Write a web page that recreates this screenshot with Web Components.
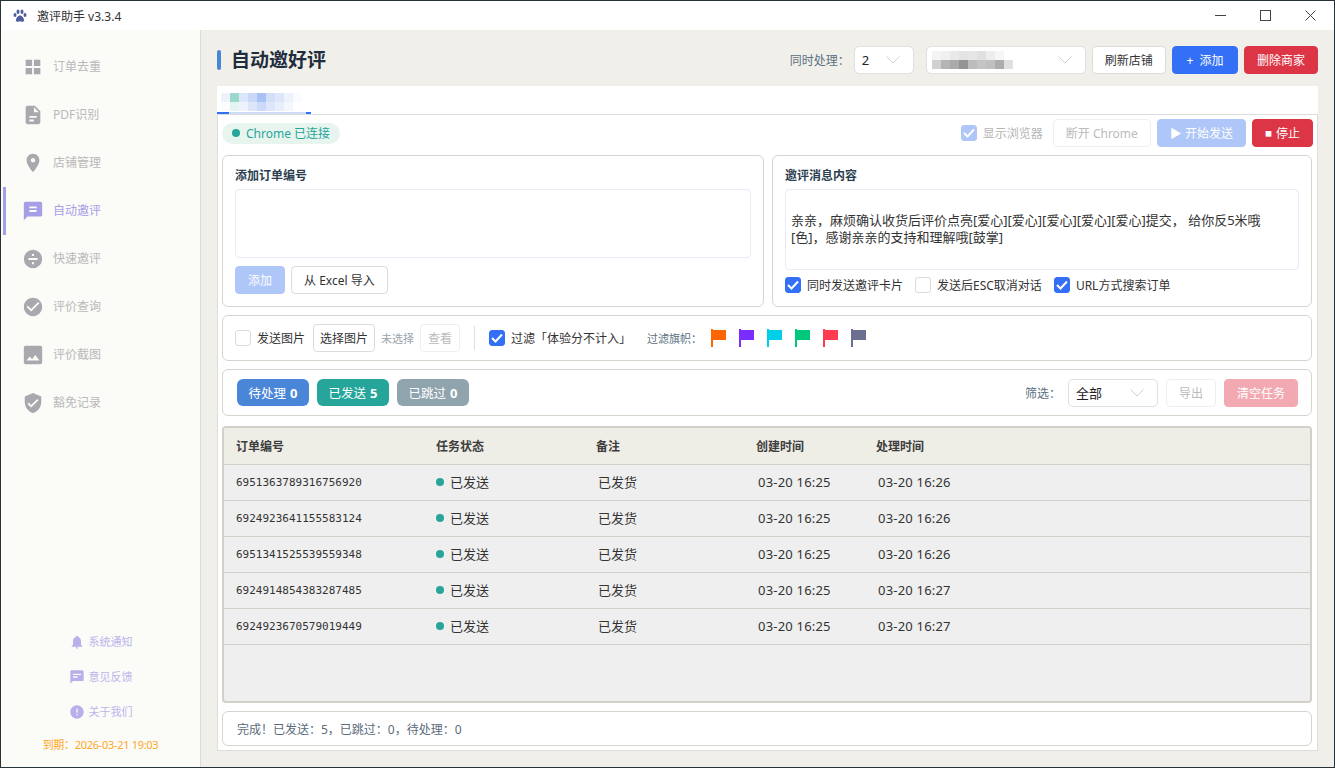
<!DOCTYPE html>
<html lang="zh">
<head>
<meta charset="utf-8">
<title>邀评助手</title>
<style>
  html, body { margin: 0; padding: 0; }
  body {
    font-family: "Noto Sans", "Noto Sans CJK SC", sans-serif;
    font-size: 12px;
    color: #333;
    overflow: hidden;
  }
  .lbl { font-size: 12px; color: #5b7080; white-space: nowrap; }
  .muted { font-size: 11px; color: #9aa5ad; white-space: nowrap; }
  .flagslbl { font-size: 11px; color: #5b7080; margin-left: 16px; white-space: nowrap; }
  .stopmark { font-size: 7px; margin-right: 4px; }
</style>
</head>
<body>
<app-window>
  <title-bar slot="top" title="邀评助手 v3.3.4"></title-bar>

  <side-bar slot="side">
    <nav-item icon="grid" label="订单去重"></nav-item>
    <nav-item icon="doc" label="PDF识别"></nav-item>
    <nav-item icon="place" label="店铺管理"></nav-item>
    <nav-item icon="chat" label="自动邀评" active></nav-item>
    <nav-item icon="divide" label="快速邀评"></nav-item>
    <nav-item icon="check" label="评价查询"></nav-item>
    <nav-item icon="image" label="评价截图"></nav-item>
    <nav-item icon="shield" label="豁免记录"></nav-item>
    <side-link slot="foot" icon="bell" label="系统通知"></side-link>
    <side-link slot="foot" icon="feedback" label="意见反馈"></side-link>
    <side-link slot="foot" icon="info" label="关于我们"></side-link>
  </side-bar>

  <main-area slot="main">
    <page-header slot="head" title="自动邀好评">
      <span class="lbl">同时处理：</span>
      <ui-select value="2" style="width:60px;margin-left:-2px"></ui-select>
      <ui-select style="width:160px;margin-left:6px"><mosaic-block cell="9" rows="#f4f4f4,#f0f0f0,#e9e9e9,#e4e4e4,#e6e6e6,#e0e0e0,#ededed,#f6f6f6;#d0d0d0,#b4b4b4,#aaaaaa,#949494,#bcbcbc,#c4c4c4,#c0c0c0,#acacac,#e0e0e0"></mosaic-block></ui-select>
      <ui-button>刷新店铺</ui-button>
      <ui-button variant="primary" style="padding:0 13.5px">+&nbsp; 添加</ui-button>
      <ui-button variant="danger">删除商家</ui-button>
    </page-header>

    <shop-tab slot="tab"><mosaic-block cell="9" rows="#eef3fb,#9bd8cb,#dbe5fb,#c9d8f9,#a9c2f6,#d3def9,#dde6fb,#eef2fd,#fafbff;#fafcfd,#e6f3f3,#eef3fb,#dde6fb,#ccd9f9,#dde6fb,#e8eefb,#f4f7fe"></mosaic-block></shop-tab>

    <task-panel slot="panel">
      <panel-toolbar slot="toolbar">
        <status-pill slot="left">Chrome 已连接</status-pill>
        <ui-check checked disabled>显示浏览器</ui-check>
        <ui-button disabled style="margin-left:4px">断开 Chrome</ui-button>
        <ui-button variant="primary" disabled>▶ 开始发送</ui-button>
        <ui-button variant="danger"><span class="stopmark">■</span>停止</ui-button>
      </panel-toolbar>

      <div-row slot="cards">
        <form-card title="添加订单编号">
          <ui-textarea></ui-textarea>
          <card-foot slot="foot" style="--foot-h:28px;--foot-gap:6px">
            <ui-button variant="primary" disabled>添加</ui-button>
            <ui-button>从 Excel 导入</ui-button>
          </card-foot>
        </form-card>
        <form-card title="邀评消息内容">
          <ui-textarea>亲亲，麻烦确认收货后评价点亮[爱心][爱心][爱心][爱心][爱心]提交， 给你反5米哦<br>[色]，感谢亲亲的支持和理解哦[鼓掌]</ui-textarea>
          <card-foot slot="foot" style="--foot-h:16px;--foot-gap:12px;--foot-top:7px;margin-bottom:1px">
            <ui-check checked>同时发送邀评卡片</ui-check>
            <ui-check>发送后ESC取消对话</ui-check>
            <ui-check checked>URL方式搜索订单</ui-check>
          </card-foot>
        </form-card>
      </div-row>

      <bar-card slot="filter" style="--bar-h:44px">
        <ui-check>发送图片</ui-check>
        <ui-button size="small" style="margin-left:8px">选择图片</ui-button>
        <span class="muted" style="margin-left:6px">未选择</span>
        <ui-button size="small" disabled style="margin-left:6px;padding:0 7px">查看</ui-button>
        <bar-divider></bar-divider>
        <ui-check checked>过滤「体验分不计入」</ui-check>
        <span class="flagslbl">过滤旗帜：</span>
        <flag-icon color="#ff6600" style="margin-left:9px"></flag-icon>
        <flag-icon color="#7b2cff"></flag-icon>
        <flag-icon color="#00cfe8"></flag-icon>
        <flag-icon color="#00c87a"></flag-icon>
        <flag-icon color="#ff3b52"></flag-icon>
        <flag-icon color="#6b7090"></flag-icon>
      </bar-card>

      <bar-card slot="stats" style="--bar-h:45px">
        <stat-pill color="#4a86d8" label="待处理" count="0" style="margin-left:2px"></stat-pill>
        <stat-pill color="#26a69a" label="已发送" count="5" style="margin-left:8px"></stat-pill>
        <stat-pill color="#90a4ae" label="已跳过" count="0" style="margin-left:8px"></stat-pill>
        <span class="lbl" style="margin-left:auto">筛选：</span>
        <ui-select value="全部" style="width:90px;margin:0 8px 0 7px"></ui-select>
        <ui-button disabled>导出</ui-button>
        <ui-button variant="danger" disabled style="margin:0 1px 0 8px">清空任务</ui-button>
      </bar-card>

      <task-table slot="table">
        <task-row order="6951363789316756920" created="03-20 16:25" done="03-20 16:26"></task-row>
        <task-row order="6924923641155583124" created="03-20 16:25" done="03-20 16:26"></task-row>
        <task-row order="6951341525539559348" created="03-20 16:25" done="03-20 16:26"></task-row>
        <task-row order="6924914854383287485" created="03-20 16:25" done="03-20 16:27"></task-row>
        <task-row order="6924923670579019449" created="03-20 16:25" done="03-20 16:27"></task-row>
      </task-table>

      <status-line slot="status">完成！已发送：5，已跳过：0，待处理：0</status-line>
    </task-panel>
  </main-area>
</app-window>

<script>
const ICONS = {
  grid: '<path d="M4 4h7v7H4zM13 4h7v7h-7zM4 13h7v7H4zM13 13h7v7h-7z"/>',
  doc: '<path fill-rule="evenodd" d="M14 2H6c-1.1 0-2 .9-2 2v16c0 1.1.9 2 2 2h12c1.1 0 2-.9 2-2V8l-6-6zM13 3.5L18.5 9H13zM8 13h8v2H8zM8 17h5v2H8z"/>',
  place: '<path d="M12 2C8.13 2 5 5.13 5 9c0 5.25 7 13 7 13s7-7.75 7-13c0-3.87-3.13-7-7-7zm0 9.5c-1.38 0-2.5-1.12-2.5-2.5s1.12-2.5 2.5-2.5 2.5 1.12 2.5 2.5-1.12 2.5-2.5 2.5z"/>',
  chat: '<path fill-rule="evenodd" d="M20 2H4c-1.1 0-2 .9-2 2v18l4-4h14c1.1 0 2-.9 2-2V4c0-1.1-.9-2-2-2zM8 7h8v2H8zM8 11h8v2H8z"/>',
  divide: '<path fill-rule="evenodd" d="M12 2a10 10 0 1 0 0 20 10 10 0 0 0 0-20zM7 11h10v2H7zM10.7 7.5a1.3 1.3 0 1 1 2.6 0 1.3 1.3 0 0 1-2.6 0zM10.7 16.5a1.3 1.3 0 1 1 2.6 0 1.3 1.3 0 0 1-2.6 0z"/>',
  check: '<path d="M12 2C6.48 2 2 6.48 2 12s4.48 10 10 10 10-4.48 10-10S17.52 2 12 2zm-2 15l-5-5 1.41-1.41L10 14.17l7.59-7.59L19 8l-9 9z"/>',
  image: '<path fill-rule="evenodd" d="M22 20V4c0-1.1-.9-2-2-2H4C2.9 2 2 2.9 2 4v16c0 1.1.9 2 2 2h16c1.1 0 2-.9 2-2zM8.5 13.5l2.5 3 3.5-4.5 4.5 6H5z"/>',
  shield: '<path d="M12 1L3 5v6c0 5.55 3.84 10.74 9 12 5.16-1.26 9-6.45 9-12V5l-9-4zm-2 16l-4-4 1.41-1.41L10 14.17l6.59-6.59L18 9l-8 8z"/>',
  bell: '<path d="M12 22c1.1 0 2-.9 2-2h-4c0 1.1.89 2 2 2zm6-6v-5c0-3.07-1.64-5.64-4.5-6.32V4c0-.83-.67-1.5-1.5-1.5s-1.5.67-1.5 1.5v.68C7.63 5.36 6 7.92 6 11v5l-2 2v1h16v-1l-2-2z"/>',
  feedback: '<path fill-rule="evenodd" d="M20 2H4c-1.1 0-2 .9-2 2v18l4-4h14c1.1 0 2-.9 2-2V4c0-1.1-.9-2-2-2zM6 7h12v2H6zM6 11h7v2H6z"/>',
  info: '<path d="M12 2C6.48 2 2 6.48 2 12s4.48 10 10 10 10-4.48 10-10S17.52 2 12 2zm1 15h-2v-2h2v2zm0-4h-2V7h2v6z"/>'
};

class AppWindow extends HTMLElement {
  constructor() {
    super();
    this.attachShadow({ mode: "open" }).innerHTML = `
      <style>
        :host { display: flex; flex-direction: column; box-sizing: border-box; width: 1335px; height: 768px; border: 1px solid #263238; background: #fff; }
        .body { flex: 1; display: flex; min-height: 0; }
      </style>
      <slot name="top"></slot>
      <div class="body"><slot name="side"></slot><slot name="main"></slot></div>`;
  }
}
customElements.define("app-window", AppWindow);

class TitleBar extends HTMLElement {
  connectedCallback() {
    this.attachShadow({ mode: "open" }).innerHTML = `
      <style>
        :host { display: flex; align-items: center; height: 29px; padding: 0 1px 0 12px; background: #fff; color: #333; }
        .name { margin-left: 10px; font-size: 12px; }
        .ctrls { margin-left: auto; display: flex; }
        .ctrls span { width: 45px; height: 29px; display: flex; align-items: center; justify-content: center; }
      </style>
      <svg width="14" height="14" viewBox="0 0 14 14" fill="#4c5c9e">
        <ellipse cx="2" cy="6" rx="1.5" ry="2"/><ellipse cx="5" cy="2.8" rx="1.5" ry="2.2"/>
        <ellipse cx="9" cy="2.8" rx="1.5" ry="2.2"/><ellipse cx="12" cy="6" rx="1.5" ry="2"/>
        <path d="M7 6.4c-2 0-4 2.6-4 4.8 0 1.4 1.2 1.8 2 1.6.8-.2 1.4-.5 2-.5s1.200.3 2 .5c.8.2 2-.2 2-1.600 0-2.200-2-4.800-4-4.800z"/>
      </svg>
      <span class="name">${this.getAttribute("title")}</span>
      <div class="ctrls">
        <span><svg width="11" height="11" viewBox="0 0 11 11" stroke="#444" fill="none"><path d="M0 5.500h11"/></svg></span>
        <span><svg width="11" height="11" viewBox="0 0 11 11" stroke="#444" fill="none"><rect x=".5" y=".5" width="10" height="10"/></svg></span>
        <span><svg width="11" height="11" viewBox="0 0 11 11" stroke="#444" fill="none"><path d="M.5.500l10 10M10.500.500l-10 10"/></svg></span>
      </div>`;
  }
}
customElements.define("title-bar", TitleBar);

class SideBar extends HTMLElement {
  constructor() {
    super();
    this.attachShadow({ mode: "open" }).innerHTML = `
      <style>
        :host { display: flex; flex-direction: column; box-sizing: border-box; width: 200px; height: 100%; padding-top: 13px; background: #fbfbf7; border-right: 1px solid #dcdcd6; }
        .foot { margin-top: auto; display: flex; flex-direction: column; }
        .expire { height: 38px; line-height: 32px; text-align: center; font-size: 11px; letter-spacing: -.3px; color: #ffa726; white-space: nowrap; }
      </style>
      <slot></slot>
      <div class="foot"><slot name="foot"></slot><div class="expire">到期：2026-03-21 19:03</div></div>`;
  }
}
customElements.define("side-bar", SideBar);

class NavItem extends HTMLElement {
  connectedCallback() {
    this.attachShadow({ mode: "open" }).innerHTML = `
      <style>
        :host { display: flex; align-items: center; box-sizing: border-box; height: 48px; margin-left: 2px; padding-left: 16px; border-left: 3px solid transparent; color: #b9b9b9; }
        :host([active]) { border-left-color: #a79ee8; color: #a79ee8; }
        svg { fill: #a8a8ae; flex: none; }
        :host([active]) svg { fill: #a79ee8; }
        span { margin-left: 9px; font-size: 12px; line-height: 16px; }
      </style>
      <svg width="22" height="22" viewBox="0 0 24 24">${ICONS[this.getAttribute("icon")]}</svg>
      <span>${this.getAttribute("label")}</span>`;
  }
}
customElements.define("nav-item", NavItem);

class SideLink extends HTMLElement {
  connectedCallback() {
    this.attachShadow({ mode: "open" }).innerHTML = `
      <style>
        :host { display: flex; align-items: center; justify-content: center; height: 35px; color: #bcb6ec; }
        svg { fill: #b7b0ea; flex: none; }
        span { margin-left: 4px; font-size: 11px; line-height: 14px; }
      </style>
      <svg width="16" height="16" viewBox="0 0 24 24">${ICONS[this.getAttribute("icon")]}</svg>
      <span>${this.getAttribute("label")}</span>`;
  }
}
customElements.define("side-link", SideLink);

class MainArea extends HTMLElement {
  constructor() {
    super();
    this.attachShadow({ mode: "open" }).innerHTML = `
      <style>
        :host { flex: 1; min-width: 0; display: flex; flex-direction: column; box-sizing: border-box; height: 100%; padding: 16px; background: #f1efea; }
        .tabs { margin-top: 12px; background: #fff; height: 28px; }
        ::slotted([slot=panel]) { flex: 1; min-height: 0; }
      </style>
      <slot name="head"></slot>
      <div class="tabs"><slot name="tab"></slot></div>
      <slot name="panel"></slot>`;
  }
}
customElements.define("main-area", MainArea);

class PageHeader extends HTMLElement {
  connectedCallback() {
    this.attachShadow({ mode: "open" }).innerHTML = `
      <style>
        :host { display: flex; align-items: center; height: 28px; }
        .mark { width: 4px; height: 20px; border-radius: 2px; background: #4a86d8; }
        h1 { margin: 0 0 0 10px; font-size: 19px; line-height: 28px; font-weight: 700; color: #1f2d3d; }
        .tools { margin-left: auto; display: flex; align-items: center; gap: 6px; }
      </style>
      <div class="mark"></div>
      <h1>${this.getAttribute("title")}</h1>
      <div class="tools"><slot></slot></div>`;
  }
}
customElements.define("page-header", PageHeader);

class UiSelect extends HTMLElement {
  connectedCallback() {
    this.attachShadow({ mode: "open" }).innerHTML = `
      <style>
        :host { display: flex; align-items: center; box-sizing: border-box; height: 28px; padding: 0 8px 0 7px; background: #fff; border: 1px solid #e0e0e0; border-radius: 5px; }
        span { font-size: 13px; color: #222; }
        svg { margin-left: auto; margin-right: 5px; flex: none; }
        ::slotted(mosaic-block) { margin-top: -1px; margin-left: -2px; }
      </style>
      <span>${this.getAttribute("value") || ""}</span><slot></slot>
      <svg width="14" height="8" viewBox="0 0 14 8" fill="none" stroke="#d0d0d0"><path d="M.5.500L7 7l6.500-6.500"/></svg>`;
  }
}
customElements.define("ui-select", UiSelect);

class UiButton extends HTMLElement {
  constructor() {
    super();
    this.attachShadow({ mode: "open" }).innerHTML = `
      <style>
        :host { display: inline-flex; align-items: center; justify-content: center; box-sizing: border-box; height: 28px; padding: 0 12px; font-size: 12px; white-space: nowrap; background: #fff; border: 1px solid #dcdcdc; border-radius: 4px; color: #333; }
        :host([size=small]) { padding: 0 6px; }
        :host([disabled]) { color: #bbb; border-color: #efefef; }
        :host([variant=primary]) { background: #3370f6; border-color: #3370f6; color: #fff; }
        :host([variant=primary][disabled]) { background: #aec6f8; border-color: #aec6f8; color: #fff; }
        :host([variant=danger]) { background: #dc3545; border-color: #dc3545; color: #fff; }
        :host([variant=danger][disabled]) { background: #f2a9b2; border-color: #f2a9b2; }
      </style>
      <slot></slot>`;
  }
}
customElements.define("ui-button", UiButton);

class UiCheck extends HTMLElement {
  constructor() {
    super();
    this.attachShadow({ mode: "open" }).innerHTML = `
      <style>
        :host { display: inline-flex; align-items: center; font-size: 12px; white-space: nowrap; color: #333; }
        :host([disabled]) { color: #b5b5b5; }
        .box { box-sizing: border-box; width: 16px; height: 16px; margin-right: 6px; border: 1px solid #dcdcdc; border-radius: 3px; background: #fff; display: flex; align-items: center; justify-content: center; }
        svg { display: none; }
        :host([checked]) .box { background: #3370f6; border-color: #3370f6; }
        :host([checked][disabled]) .box { background: #aec6f8; border-color: #aec6f8; }
        :host([checked]) svg { display: block; }
      </style>
      <span class="box"><svg width="12" height="10" viewBox="0 0 12 10" fill="none" stroke="#fff" stroke-width="2"><path d="M1 5l3.500 3.500L11 1.500"/></svg></span>
      <slot></slot>`;
  }
}
customElements.define("ui-check", UiCheck);

class MosaicBlock extends HTMLElement {
  connectedCallback() {
    const cell = this.getAttribute("cell");
    const rows = this.getAttribute("rows").split(";").map((row) => {
      const cells = row.split(",").map((c) => `<i style="background:${c}"></i>`).join("");
      return `<div>${cells}</div>`;
    }).join("");
    this.attachShadow({ mode: "open" }).innerHTML = `
      <style>
        :host { display: block; }
        div { display: flex; }
        i { display: block; width: ${cell}px; height: ${cell}px; }
      </style>
      ${rows}`;
  }
}
customElements.define("mosaic-block", MosaicBlock);

class ShopTab extends HTMLElement {
  constructor() {
    super();
    this.attachShadow({ mode: "open" }).innerHTML = `
      <style>
        :host { display: flex; flex-direction: column; box-sizing: border-box; width: 94px; height: 28px; padding-top: 7px; }
        .txt { flex: 1; padding-left: 4px; }
        .line { height: 2px; background: linear-gradient(90deg, #3370f6 12px, #cfdcfa 12px, #cfdcfa 89px, #3370f6 89px); }
      </style>
      <div class="txt"><slot></slot></div>
      <div class="line"></div>`;
  }
}
customElements.define("shop-tab", ShopTab);

class TaskPanel extends HTMLElement {
  constructor() {
    super();
    this.attachShadow({ mode: "open" }).innerHTML = `
      <style>
        :host { display: flex; flex-direction: column; box-sizing: border-box; padding: 4px 5px 4px 4px; background: #fff; border: 1px solid #dddddd; }
        ::slotted([slot=cards]) { margin-top: 8px; }
        ::slotted([slot=filter]) { margin-top: 8px; }
        ::slotted([slot=stats]) { margin-top: 8px; }
        ::slotted([slot=table]) { margin-top: 10px; flex: 1; min-height: 0; }
        ::slotted([slot=status]) { margin-top: 8px; }
      </style>
      <slot name="toolbar"></slot><slot name="cards"></slot><slot name="filter"></slot>
      <slot name="stats"></slot><slot name="table"></slot><slot name="status"></slot>`;
  }
}
customElements.define("task-panel", TaskPanel);

class PanelToolbar extends HTMLElement {
  constructor() {
    super();
    this.attachShadow({ mode: "open" }).innerHTML = `
      <style>
        :host { display: flex; align-items: center; height: 28px; margin-right: -1px; }
        .right { margin-left: auto; display: flex; align-items: center; gap: 6px; }
      </style>
      <slot name="left"></slot>
      <div class="right"><slot></slot></div>`;
  }
}
customElements.define("panel-toolbar", PanelToolbar);

class StatusPill extends HTMLElement {
  constructor() {
    super();
    this.attachShadow({ mode: "open" }).innerHTML = `
      <style>
        :host { display: inline-flex; align-items: center; height: 21px; padding: 0 10px; border-radius: 11px; background: #e8f5ee; color: #26a69a; font-size: 12px; white-space: nowrap; }
        i { width: 8px; height: 8px; border-radius: 50%; background: #26a69a; margin-right: 6px; }
      </style>
      <i></i><slot></slot>`;
  }
}
customElements.define("status-pill", StatusPill);

class DivRow extends HTMLElement {
  constructor() {
    super();
    this.attachShadow({ mode: "open" }).innerHTML = `
      <style>
        :host { display: grid; grid-template-columns: 542px 1fr; gap: 8px; height: 152px; }
      </style>
      <slot></slot>`;
  }
}
customElements.define("div-row", DivRow);

class FormCard extends HTMLElement {
  connectedCallback() {
    this.attachShadow({ mode: "open" }).innerHTML = `
      <style>
        :host { display: flex; flex-direction: column; box-sizing: border-box; min-width: 0; padding: 12px 12px 12px; background: #fff; border: 1px solid #d5d4cd; border-radius: 6px; }
        h3 { margin: 0 0 5px; font-size: 12px; line-height: 16px; font-weight: 700; color: #2c3e50; }
        .body { flex: 1; display: flex; min-height: 0; }
      </style>
      <h3>${this.getAttribute("title")}</h3>
      <div class="body"><slot></slot></div>
      <slot name="foot"></slot>`;
  }
}
customElements.define("form-card", FormCard);

class UiTextarea extends HTMLElement {
  constructor() {
    super();
    this.attachShadow({ mode: "open" }).innerHTML = `
      <style>
        :host { flex: 1; display: block; box-sizing: border-box; padding: 22px 5px 0; font-size: 13px; line-height: 17px; color: #333; background: #fff; border: 1px solid #e8ebf6; border-radius: 4px; white-space: nowrap; }
      </style>
      <slot></slot>`;
  }
}
customElements.define("ui-textarea", UiTextarea);

class CardFoot extends HTMLElement {
  constructor() {
    super();
    this.attachShadow({ mode: "open" }).innerHTML = `
      <style>
        :host { display: flex; align-items: center; height: var(--foot-h); gap: var(--foot-gap); margin-top: var(--foot-top, 8px); }
      </style>
      <slot></slot>`;
  }
}
customElements.define("card-foot", CardFoot);

class BarCard extends HTMLElement {
  constructor() {
    super();
    this.attachShadow({ mode: "open" }).innerHTML = `
      <style>
        :host { display: flex; align-items: center; height: var(--bar-h); padding: 0 12px; background: #fff; border: 1px solid #d5d4cd; border-radius: 6px; }
        ::slotted(flag-icon) { margin-right: 12px; }
      </style>
      <slot></slot>`;
  }
}
customElements.define("bar-card", BarCard);

class BarDivider extends HTMLElement {
  constructor() {
    super();
    this.attachShadow({ mode: "open" }).innerHTML = `
      <style>
        :host { display: block; width: 1px; height: 24px; margin: 0 14px; background: #dddddd; }
      </style>`;
  }
}
customElements.define("bar-divider", BarDivider);

class FlagIcon extends HTMLElement {
  connectedCallback() {
    const color = this.getAttribute("color");
    this.attachShadow({ mode: "open" }).innerHTML = `
      <style>
        :host { display: block; width: 16px; height: 18px; }
        svg { display: block; }
      </style>
      <svg width="16" height="18" viewBox="0 0 16 18"><path fill="${color}" d="M0 0h2v18H0zM2 1h13v10H2z"/></svg>`;
  }
}
customElements.define("flag-icon", FlagIcon);

class StatPill extends HTMLElement {
  connectedCallback() {
    const color = this.getAttribute("color");
    this.attachShadow({ mode: "open" }).innerHTML = `
      <style>
        :host { display: inline-flex; align-items: center; justify-content: center; box-sizing: border-box; width: 72px; height: 27px; border-radius: 6px; background: ${color}; color: #fff; font-size: 12.5px; white-space: nowrap; }
        b { margin-left: 4px; font-size: 13px; }
      </style>
      ${this.getAttribute("label")}<b>${this.getAttribute("count")}</b>`;
  }
}
customElements.define("stat-pill", StatPill);

class TaskTable extends HTMLElement {
  constructor() {
    super();
    this.attachShadow({ mode: "open" }).innerHTML = `
      <style>
        :host { display: block; box-sizing: border-box; background: #efefef; border: 2px solid #d2d0c9; border-radius: 4px; overflow: hidden; --cols: 200px 160px 160px 120px 1fr; }
        .head { display: grid; grid-template-columns: var(--cols); align-items: center; box-sizing: border-box; height: 37px; padding-left: 12px; background: #eeede6; border-bottom: 1px solid #d2d0c9; font-size: 12px; font-weight: 700; color: #3d3d3d; }
      </style>
      <div class="head"><span>订单编号</span><span>任务状态</span><span>备注</span><span>创建时间</span><span>处理时间</span></div>
      <slot></slot>`;
  }
}
customElements.define("task-table", TaskTable);

class TaskRow extends HTMLElement {
  connectedCallback() {
    this.attachShadow({ mode: "open" }).innerHTML = `
      <style>
        :host { display: grid; grid-template-columns: var(--cols); align-items: center; box-sizing: border-box; height: 36px; padding: 0 0 2px 12px; border-bottom: 1px solid #d2d0c9; font-size: 13px; color: #333; }
        .order { font-family: "DejaVu Sans Mono", monospace; font-size: 11px; padding-top: 2px; }
        .state { display: flex; align-items: center; }
        .state i { width: 8px; height: 8px; border-radius: 50%; background: #26a69a; margin-right: 6px; }
        .pad { padding-left: 2px; }
        .time { padding-left: 2px; letter-spacing: .2px; white-space: nowrap; }
      </style>
      <span class="order">${this.getAttribute("order")}</span>
      <span class="state"><i></i>已发送</span>
      <span class="pad">已发货</span>
      <span class="time">${this.getAttribute("created")}</span>
      <span class="time">${this.getAttribute("done")}</span>`;
  }
}
customElements.define("task-row", TaskRow);

class StatusLine extends HTMLElement {
  constructor() {
    super();
    this.attachShadow({ mode: "open" }).innerHTML = `
      <style>
        :host { display: flex; align-items: center; height: 33px; padding-left: 14px; background: #fff; border: 1px solid #d5d4cd; border-radius: 6px; font-size: 12px; color: #5b6b7b; }
      </style>
      <slot></slot>`;
  }
}
customElements.define("status-line", StatusLine);
</script>
</body>
</html>
